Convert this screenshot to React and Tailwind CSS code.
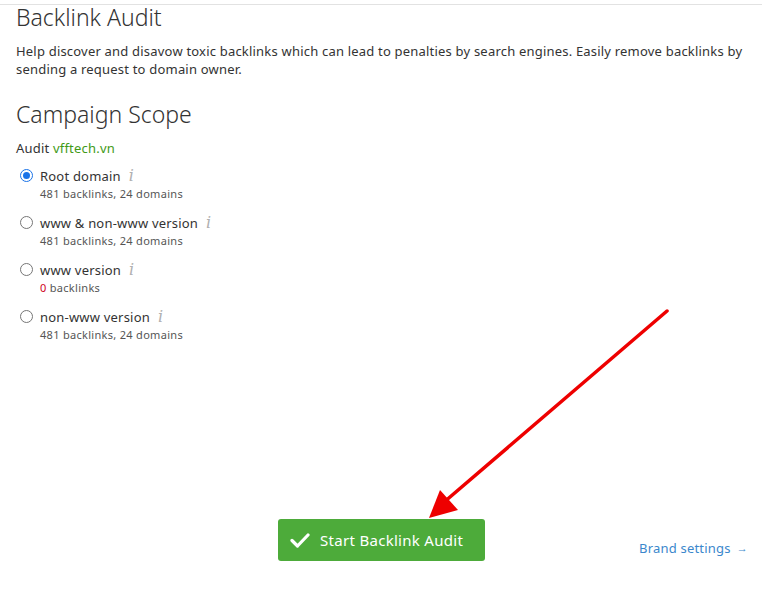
import React from "react";

const font = { fontFamily: '"Noto Sans", "Open Sans", sans-serif' };

function Info() {
  return (
    <span className="ml-[8px] text-[16px] italic text-[#b0b0b0] leading-none" style={{ fontFamily: '"DejaVu Serif", "Liberation Serif", serif' }}>
      i
    </span>
  );
}

function Option({ checked, label, sub }) {
  return (
    <div className="flex items-start gap-[7px]">
      <div className="pt-[2px]">
        {checked ? (
          <div className="w-[13px] h-[13px] rounded-full border border-[#1a73e8] flex items-center justify-center bg-white">
            <div className="w-[7px] h-[7px] rounded-full bg-[#1a73e8]" />
          </div>
        ) : (
          <div className="w-[13px] h-[13px] rounded-full border border-[#767676] bg-white" />
        )}
      </div>
      <div className="flex flex-col">
        <div className="flex items-center text-[13px] leading-[18px] text-[#333] tracking-[0.2px]">
          {label}
          <Info />
        </div>
        <div className="text-[11px] leading-[18px] text-[#555] tracking-[0.3px]">{sub}</div>
      </div>
    </div>
  );
}

export default function App() {
  return (
    <div className="relative w-[770px] h-[589px] bg-white overflow-hidden" style={font}>
      <div className="h-[5px] border-b border-[#e2e2e2] w-[762px]" />
      <div className="px-[16px]">
        <h1 className="text-[23px] leading-[22px] font-light text-[#333] mt-[1px]">Backlink Audit</h1>
        <p className="mt-[14px] text-[13px] leading-[18px] text-[#333] tracking-[0.2px]">
          Help discover and disavow toxic backlinks which can lead to penalties by search engines. Easily remove backlinks by sending a request to domain owner.
        </p>
        <h2 className="mt-[22px] text-[23px] leading-[28px] font-light text-[#333]">Campaign Scope</h2>
        <div className="mt-[11px] text-[13px] leading-[18px] text-[#333] tracking-[0.2px]">
          Audit <span className="text-[#3f9a17]">vfftech.vn</span>
        </div>
        <div className="mt-[10px] pl-[4px] flex flex-col gap-[11px]">
          <Option checked label="Root domain" sub="481 backlinks, 24 domains" />
          <Option label="www & non-www version" sub="481 backlinks, 24 domains" />
          <Option label="www version" sub={<><span className="text-[#d0021b]">0</span> backlinks</>} />
          <Option label="non-www version" sub="481 backlinks, 24 domains" />
        </div>
      </div>
      <div className="absolute left-[278px] top-[519px] flex items-center">
        <button className="h-[42px] w-[207px] rounded-[3px] bg-[#4dab3a] flex items-center pl-[12px] text-white text-[15px] tracking-[0.3px]">
          <svg width="20" height="16" viewBox="0 0 20 16" className="mr-[10px]">
            <path d="M2 8.5 L7.5 14 L18 3" fill="none" stroke="white" strokeWidth="3.2" strokeLinecap="round" strokeLinejoin="round" />
          </svg>
          Start Backlink Audit
        </button>
      </div>
      <div className="absolute left-[639px] top-[539px] text-[13px] leading-[18px] text-[#3b87cc] flex items-center tracking-[0.2px]">
        Brand settings <span className="ml-[6px] text-[11px]">→</span>
      </div>
      <svg className="absolute left-0 top-0 pointer-events-none" width="770" height="589">
        <line x1="667" y1="311" x2="443" y2="503" stroke="#ee0000" strokeWidth="3.5" strokeLinecap="round" />
        <polygon points="429,518 440,490 458,510" fill="#ee0000" />
      </svg>
    </div>
  );
}
